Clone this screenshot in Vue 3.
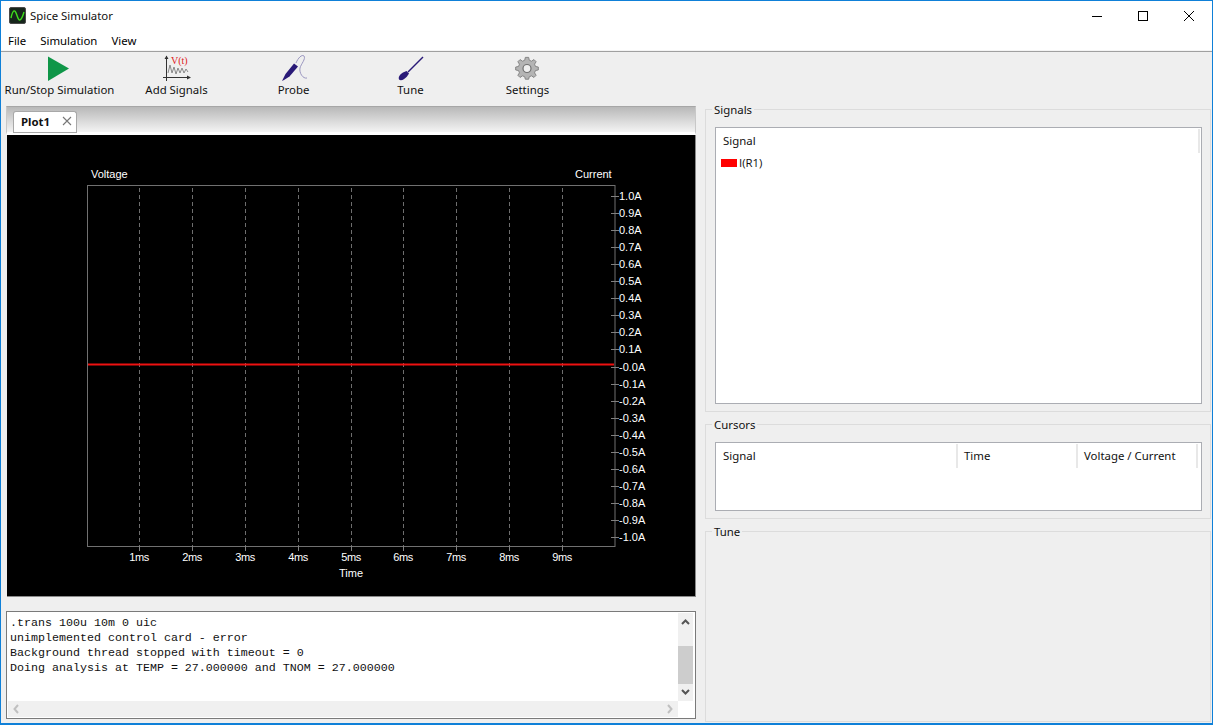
<script setup>
const menus = ['File', 'Simulation', 'View']
const tools = ['Run/Stop Simulation', 'Add Signals', 'Probe', 'Tune', 'Settings']
const gridX = [139.5, 192.5, 245.5, 298.5, 351.5, 403.5, 456.5, 509.5, 562.5]
const yTicks = Array.from({ length: 21 }, (_, i) => {
  const v = 10 - i
  const sign = v <= 0 ? '-' : ''
  return { y: Math.round(196 + i * 17.05) + 0.5, label: `${sign}${(Math.abs(v) / 10).toFixed(1)}A` }
})
const consoleLines = [
  '.trans 100u 10m 0 uic',
  'unimplemented control card - error',
  'Background thread stopped with timeout = 0',
  'Doing analysis at TEMP = 27.000000 and TNOM = 27.000000'
]
</script>

<template>
  <div class="window">
    <header class="titlebar">
      <svg class="app-icon" width="17" height="17" viewBox="0 0 17 17">
        <rect x="0.5" y="0.5" width="16" height="16" rx="1.5" fill="#16261c" stroke="#4a4a4a" />
        <path d="M2 11 C4 2 6 2 8 8.500 C10 15 12 15 15 5" fill="none" stroke="#3ee01c" stroke-width="1.400" />
      </svg>
      <span class="title">Spice Simulator</span>
      <div class="controls">
        <svg width="46" height="30" viewBox="0 0 46 30"><path d="M18 15.500H28" stroke="#000" /></svg>
        <svg width="46" height="30" viewBox="0 0 46 30"><rect x="18.500" y="10.500" width="9" height="9" fill="none" stroke="#000" /></svg>
        <svg width="46" height="30" viewBox="0 0 46 30"><path d="M18 10L28 20M28 10L18 20" stroke="#000" /></svg>
      </div>
    </header>

    <nav class="menubar">
      <span v-for="m in menus" :key="m" class="menu">{{ m }}</span>
    </nav>

    <div class="toolbar">
      <button v-for="(t, i) in tools" :key="t" class="tool">
        <svg class="tool-icon" width="30" height="28" viewBox="0 0 30 28">
          <template v-if="i === 0">
            <path d="M5 2.500L26 14.500L5 27Z" fill="#0f9648" transform="translate(-2,-1)" />
          </template>
          <template v-else-if="i === 1">
            <path d="M4.500 1V26M1 22.500H28" stroke="#333" fill="none" />
            <path d="M2.500 4L4.500 0.500L6.500 4ZM25 20.500L29 22.500L25 24.500Z" fill="#333" />
            <path d="M6 18L8 10L10 18L12 12L14 19L16 13L18 18L20 13L22 18L24 14L26 17" stroke="#888" fill="none" />
            <text x="9" y="9" class="vt">V(t)</text>
          </template>
          <template v-else-if="i === 2">
            <path d="M3 26L6.500 19L15 8.500L19 11.500L10.500 21.500L5 25Z" fill="#2a1a78" />
            <path d="M17 8C19 3 23 -1 25 1C27 4 22 9 21 13C20 18 24 24 28 23" stroke="#9a96c0" fill="none" />
          </template>
          <template v-else-if="i === 3">
            <path d="M3 24.500C2 22 4 19 7 17.500L10.500 16L13 18.500L11 21.500C9 24 5 26.500 3 24.500Z" fill="#2a1a78" />
            <path d="M12 17L27 2" stroke="#2a1a78" stroke-width="1.500" />
          </template>
          <template v-else>
            <path
              d="M13 2H17L17.700 5.400L20.400 6.500L23.300 4.600L25.900 7.200L24 10.100L25.100 12.800L28.500 13.500V17L25.100 17.700L24 20.400L25.900 23.300L23.300 25.900L20.400 24L17.700 25.100L17 28H13L12.300 25.100L9.600 24L6.700 25.900L4.100 23.300L6 20.400L4.900 17.700L1.500 17V13.500L4.900 12.800L6 10.100L4.100 7.200L6.700 4.600L9.600 6.500L12.300 5.400Z"
              fill="#b4b4b4" stroke="#787878" transform="translate(1.400,0.700) scale(0.84)"
            />
            <circle cx="14" cy="13.500" r="4" fill="#efefef" stroke="#707070" stroke-width="1.200" />
          </template>
        </svg>
        <span>{{ t }}</span>
      </button>
    </div>

    <main class="body">
      <section class="left">
        <div class="tabs">
          <div class="tab">
            <span>Plot1</span>
            <svg width="10" height="10" viewBox="0 0 10 10"><path d="M1 1L9 9M9 1L1 9" stroke="#777" stroke-width="1.100" /></svg>
          </div>
        </div>
        <div class="plot">
          <svg width="688" height="461" viewBox="7 135 688 461">
            <rect x="87.500" y="185.500" width="527.500" height="361" fill="none" stroke="#707070" />
            <g v-for="x in gridX" :key="x">
              <path :d="`M${x} 188V546`" stroke="#6e6e6e" stroke-dasharray="4 3" />
              <path :d="`M${x} 546V551`" stroke="#808080" />
            </g>
            <g v-for="t in yTicks" :key="t.label + t.y">
              <path :d="`M611 ${t.y}H619`" stroke="#808080" />
              <text x="619" :y="t.y + 3.500" class="axis">{{ t.label }}</text>
            </g>
            <path d="M88 364.500H614" stroke="#ee1111" stroke-width="2" />
            <text v-for="(x, i) in gridX" :key="'l' + x" :x="x - 0.5" y="561" class="axis mid ms">{{ i + 1 }}ms</text>
            <text x="351" y="577" class="axis mid">Time</text>
            <text x="91" y="178" class="axis">Voltage</text>
            <text x="575" y="178" class="axis">Current</text>
          </svg>
        </div>
        <div class="console">
          <div class="console-top">
            <pre class="console-text"><template v-for="l in consoleLines" :key="l">{{ l }}
</template></pre>
            <div class="vscroll">
              <svg width="15" height="17" viewBox="0 0 15 17"><path d="M4 11L7.500 7.500L11 11" fill="none" stroke="#555" stroke-width="2" /></svg>
              <div class="vtrack"><div class="vthumb"></div></div>
              <svg width="15" height="17" viewBox="0 0 15 17"><path d="M4 6L7.500 9.500L11 6" fill="none" stroke="#555" stroke-width="2" /></svg>
            </div>
          </div>
          <div class="hscroll">
            <svg width="17" height="16" viewBox="0 0 17 16"><path d="M10 4L6.500 8L10 12" fill="none" stroke="#c0c0c0" stroke-width="2" /></svg>
            <svg width="17" height="16" viewBox="0 0 17 16"><path d="M7 4L10.500 8L7 12" fill="none" stroke="#c0c0c0" stroke-width="2" /></svg>
          </div>
        </div>
      </section>

      <aside class="right">
        <div class="group g-signals">
          <span class="legend">Signals</span>
          <div class="list list-signals">
            <div class="head">
              <span class="cell c-full">Signal</span>
            </div>
            <div class="signal-row"><i class="swatch"></i><span class="signal-name">I(R1)</span></div>
          </div>
        </div>
        <div class="group g-cursors">
          <span class="legend">Cursors</span>
          <div class="list list-cursors">
            <div class="head">
              <span class="cell c1">Signal</span>
              <span class="cell c2">Time</span>
              <span class="cell c3">Voltage / Current</span>
            </div>
          </div>
        </div>
        <div class="group g-tune">
          <span class="legend">Tune</span>
        </div>
      </aside>
    </main>
  </div>
</template>

<style>
html, body { margin: 0; padding: 0; background: #efefef; }
</style>

<style scoped>
.window {
  width: 1213px;
  height: 725px;
  box-sizing: border-box;
  border: 1px solid #0f80d8;
  border-bottom-width: 2px;
  background: #efefef;
  display: flex;
  flex-direction: column;
  overflow: hidden;
  font-family: "Noto Sans", "Open Sans", sans-serif;
  font-size: 11.4px;
  color: #000;
}
.titlebar {
  height: 29px;
  background: #fff;
  display: flex;
  align-items: center;
  padding-left: 8px;
  flex: none;
}
.app-icon { margin-right: 4px; }
.title { color: #111; }
.controls { margin-left: auto; display: flex; margin-right: 0; }
.controls svg { display: block; }
.menubar {
  background: #fff;
  border-bottom: 1px solid #a0a0a0;
  box-shadow: inset 0 -1px 0 #f4f4f4;
  display: flex;
  align-items: center;
  padding-left: 7px;
  padding-bottom: 1px;
  height: 20px;
  gap: 14px;
  flex: none;
}
.toolbar {
  height: 54px;
  display: flex;
  flex: none;
}
.tool {
  width: 117px;
  height: 54px;
  padding: 3px 0 0;
  background: none;
  border: 0;
  font: inherit;
  color: #111;
  display: flex;
  flex-direction: column;
  align-items: center;
  white-space: nowrap;
}
.tool-icon { display: block; margin-bottom: -1px; }
.vt { font-family: "Liberation Serif", serif; font-size: 10px; fill: #e02020; }

.body {
  flex: 1;
  display: flex;
  min-height: 0;
  padding-left: 5px;
}
.left {
  width: 690px;
  flex: none;
  display: flex;
  flex-direction: column;
}
.tabs {
  height: 29px;
  box-sizing: border-box;
  border-top: 1px solid #a6a6a6;
  border-left: 1px solid #c8c8c8;
  border-right: 1px solid #c8c8c8;
  border-bottom: 3px solid #fff;
  background: linear-gradient(#b8b8b8, #f4f4f4);
  padding: 3px 0 0 6px;
  display: flex;
  align-items: flex-end;
}
.tab {
  width: 64px;
  height: 21px;
  padding: 0 4px 2px 7px;
  box-sizing: border-box;
  background: #fff;
  border: 1px solid #a8a8a8;
  border-bottom: 0;
  border-radius: 3px 3px 0 0;
  display: flex;
  align-items: center;
  justify-content: space-between;
  font-weight: 700;
  color: #111;
  box-shadow: 0 1px 0 #a8a8a8;
}
.plot {
  height: 462px;
  box-sizing: border-box;
  margin-left: 1px;
  width: 689px;
  background: #000;
  border-right: 1px solid #8a8a8a;
  border-bottom: 1px solid #8a8a8a;
}
.plot svg { display: block; }
.axis {
  font-family: "Liberation Sans", Arial, sans-serif;
  font-size: 11px;
  fill: #fff;
}
.mid { text-anchor: middle; }
.ms { letter-spacing: -0.5px; }
.console {
  margin-top: 14px;
  height: 108px;
  box-sizing: border-box;
  border: 1px solid #7a7a7a;
  background: #fff;
  padding: 1px;
  display: flex;
  flex-direction: column;
}
.console-top { flex: 1; display: flex; min-height: 0; }
.console-text {
  flex: 1;
  margin: 0;
  padding: 3px 0 0 2px;
  font-family: "Liberation Mono", "Courier New", monospace;
  font-size: 11.67px;
  line-height: 15px;
  color: #111;
}
.vscroll {
  width: 15px;
  background: #f0f0f0;
  display: flex;
  flex-direction: column;
  margin-right: 1px;
}
.vscroll svg { display: block; flex: none; }
.vtrack { flex: 1; padding-top: 16px; }
.vthumb { height: 38px; background: #cdcdcd; }
.hscroll {
  height: 16px;
  flex: none;
  background: #f0f0f0;
  display: flex;
  justify-content: space-between;
  margin-right: 16px;
}
.hscroll svg { display: block; }

.right {
  margin-left: 9px;
  width: 506px;
  padding-top: 3px;
  display: flex;
  flex-direction: column;
  gap: 12px;
}
.group {
  position: relative;
  box-sizing: border-box;
  border: 1px solid #dcdcdc;
  padding: 17px 9px 0 9px;
  flex: none;
}
.g-signals { height: 303px; }
.g-cursors { height: 95px; }
.g-tune { flex: 1; margin-bottom: 1px; }
.legend {
  position: absolute;
  top: -8px;
  left: 6px;
  padding: 0 2px;
  background: #efefef;
  color: #111;
}
.list {
  box-sizing: border-box;
  width: 487px;
  background: #fff;
  border: 1px solid #abadb3;
}
.list-signals { height: 277px; }
.list-cursors { height: 69px; }
.head {
  height: 25px;
  display: flex;
  align-items: center;
}
.cell { padding-left: 7px; height: 24px; line-height: 24px; box-sizing: border-box; border-right: 2px solid #e8e8e8; color: #111; }
.c-full { width: 484px; }
.c1 { width: 242px; }
.c2 { width: 120px; }
.c3 { width: 120px; }
.c2, .c3 { padding-left: 6px; }
.signal-row {
  height: 18px;
  display: flex;
  align-items: center;
  padding-left: 5px;
  color: #111;
}
.signal-name { font-family: "Open Sans", sans-serif; font-size: 11.4px; }
.swatch { width: 16px; height: 8px; background: #f00; display: block; margin: 1px 2px 0 0; }
</style>
